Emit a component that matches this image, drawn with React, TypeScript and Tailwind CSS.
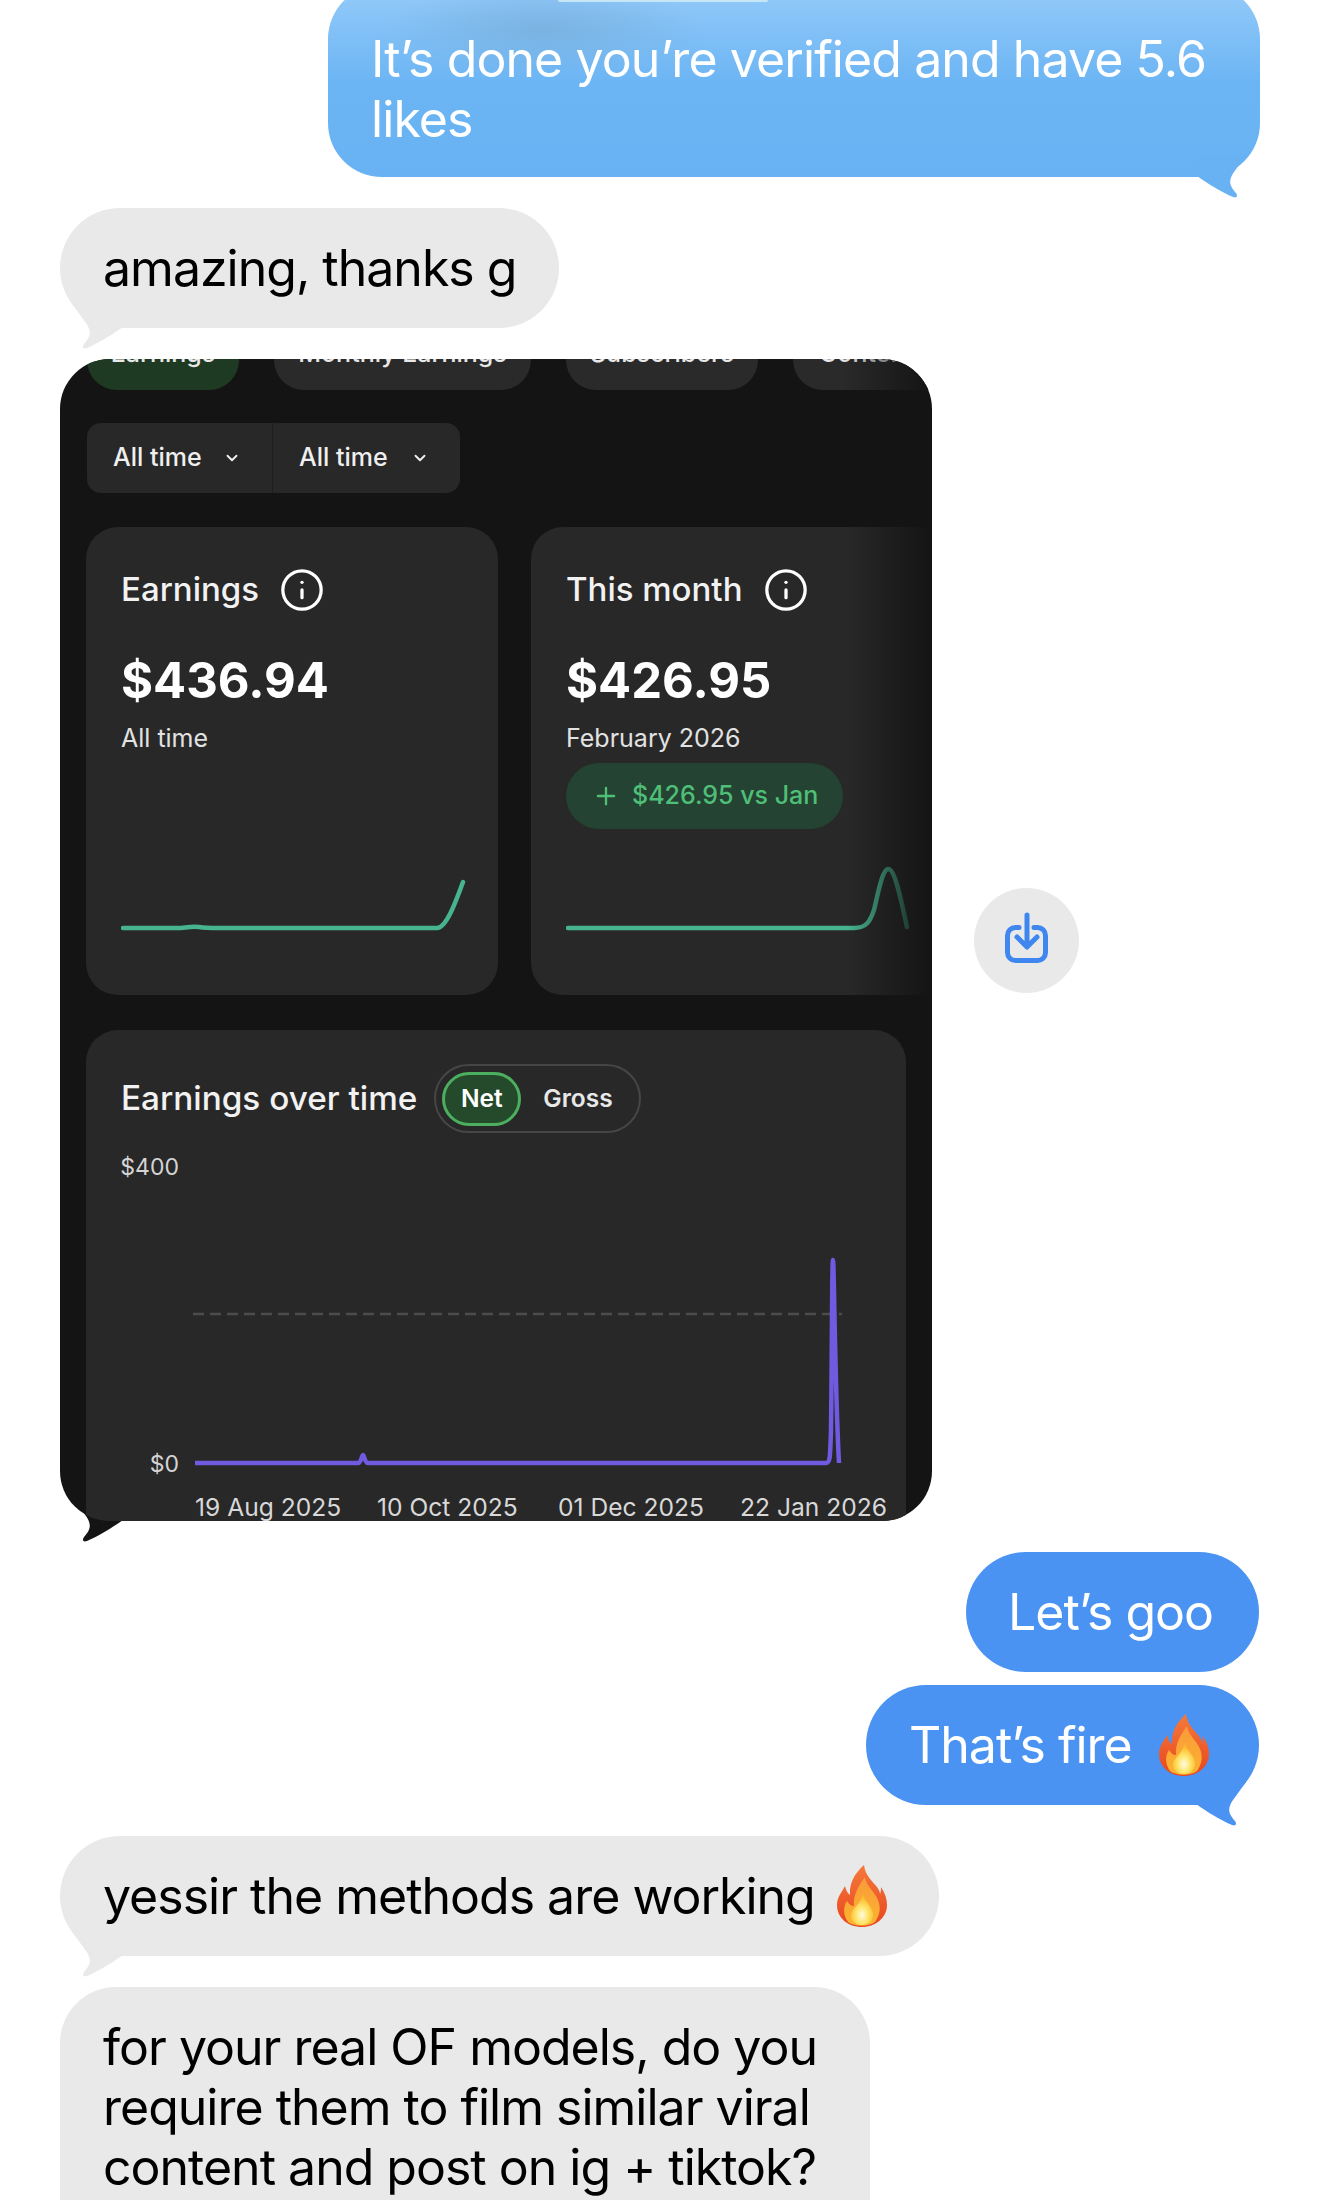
import { ChevronDown, Info, Plus } from "lucide-react";

function Tail({ color, side }: { color: string; side: "left" | "right" }) {
  return (
    <svg
      width="60"
      height="50"
      viewBox="0 0 60 50"
      className={side === "right" ? "absolute right-[9px] bottom-[-25px]" : "absolute left-[9px] bottom-[-25px] scale-x-[-1]"}
    >
      <path
        d="M6 24 C16 31 30 40 42 45 C46 46.5 47 44 45 41 C40 35 36 30 43 20 L56 2 L6 2 Z"
        fill={color}
      />
    </svg>
  );
}

function Flame({ id }: { id: string }) {
  return (
    <svg width="50" height="62" viewBox="0 0 50 62">
      <defs>
        <linearGradient id={id + "a"} x1="0" y1="0" x2="0" y2="1">
          <stop offset="0" stopColor="#f47a3c" />
          <stop offset="1" stopColor="#e9451f" />
        </linearGradient>
        <linearGradient id={id + "b"} x1="0" y1="0" x2="0" y2="1">
          <stop offset="0" stopColor="#f99a3a" />
          <stop offset="1" stopColor="#fbb42f" />
        </linearGradient>
        <radialGradient id={id + "c"} cx="0.5" cy="0.68" r="0.55">
          <stop offset="0" stopColor="#fffbe6" />
          <stop offset="0.45" stopColor="#ffe874" />
          <stop offset="1" stopColor="#fcbb2e" />
        </radialGradient>
      </defs>
      <path
        d="M27 0 C28 10 35 16 40 22 C42 25 43 27 43 29 C44 27 44 24 44 22 C48 28 50 34 50 40 C50 53 38 62 25 62 C11 62 0 53 0 40 C0 32 5 27 8 21 C9 25 10 28 13 30 C12 18 18 8 27 0 Z"
        fill={`url(#${id}a)`}
      />
      <path
        d="M28 12 C29 21 38 27 41 35 C44 42 43 50 38 57 C31 62 18 62 11 57 C6 50 6 42 10 36 C12 39 14 41 17 41 C16 31 21 21 28 12 Z"
        fill={`url(#${id}b)`}
      />
      <path
        d="M26 29 C27 36 35 41 36 48 C37 55 32 60 25 60 C18 60 13 55 14 49 C16 43 24 38 26 29 Z"
        fill={`url(#${id}c)`}
      />
    </svg>
  );
}

function SparkCard({ title, value, sub, path, width, pill }: { title: string; value: string; sub: string; path: string; width: string; pill?: boolean }) {
  return (
    <div className={`${width} shrink-0 h-[468px] rounded-[32px] bg-[#282828] pl-[35px] pt-[43px] pb-[45px] flex flex-col`}>
      <div className="flex items-center gap-[20px] h-[40px] text-[33px] font-medium text-[#f2f2f2]">
        {title}
        <Info size={46} strokeWidth={1.7} className="text-white" />
      </div>
      <div className="mt-[41px] h-[60px] leading-[60px] text-[49px] font-bold text-white">{value}</div>
      <div className="mt-[11px] h-[32px] leading-[32px] text-[25px] text-[#e2e2e2]">{sub}</div>
      {pill && (
        <div className="mt-[9px] w-[277px] h-[66px] rounded-full bg-[#244332] flex items-center pl-[26px] gap-[12px] text-[25px] font-medium text-[#4fbf78]">
          <Plus size={28} strokeWidth={2} />
          $426.95 vs Jan
        </div>
      )}
      <svg width="350" height="90" viewBox="0 0 350 90" className="mt-auto">
        <path d={path} fill="none" stroke="#47b48e" strokeWidth="4.5" strokeLinecap="round" />
      </svg>
    </div>
  );
}

export default function App() {
  const text = "text-[50px] leading-[60px] font-normal tracking-[-0.02em]";
  return (
    <div className="w-[1320px] h-[2200px] overflow-hidden bg-white flex flex-col font-['Inter','Liberation_Sans',sans-serif]">
      {/* first sent message */}
      <div className="relative self-end mr-[60px] mt-[-15px] w-[932px] h-[192px] shrink-0">
        <div className="relative overflow-hidden h-full rounded-[54px] bg-gradient-to-b from-[#95cbf9] via-[#6cb5f4] via-50% to-[#68b2f3] pl-[43px] pt-[44px] text-white text-[50px] leading-[60px] font-normal tracking-[-0.018em]">
          <div className="absolute left-[50px] top-0 w-[330px] h-[90px] bg-[radial-gradient(ellipse_at_center,#76add9b0,transparent_70%)]" />
          <div className="absolute left-[230px] top-[13px] w-[210px] h-[4px] rounded-full bg-[#c4e6f5]" />
          <div className="relative">
            It’s done you’re verified and have 5.6
            <br />
            likes
          </div>
        </div>
        <Tail color="#68b2f3" side="right" />
      </div>

      <div className={`relative ml-[60px] mt-[31px] w-[499px] h-[120px] shrink-0 rounded-[60px] bg-[#e9e9e9] pl-[43px] py-[30px] text-black ${text}`}>
        amazing, thanks g
        <Tail color="#e9e9e9" side="left" />
      </div>

      {/* screenshot attachment */}
      <div className="flex items-center mt-[31px] ml-[60px] gap-[42px] shrink-0">
        <div className="relative w-[872px] h-[1162px]">
          <Tail color="#141414" side="left" />
          <div className="relative h-full overflow-hidden rounded-[50px] bg-[#141414]">
            <div className="relative mt-[-42px] pl-[27px] flex gap-[35px] text-[25px] font-medium text-[#e8e8e8] overflow-hidden">
              <div className="w-[152px] h-[73px] shrink-0 rounded-[30px] bg-[#1f3a22] flex items-center justify-center">Earnings</div>
              <div className="w-[257px] h-[73px] shrink-0 rounded-[30px] bg-[#2a2a2a] flex items-center justify-center">Monthly Earnings</div>
              <div className="w-[192px] h-[73px] shrink-0 rounded-[30px] bg-[#2a2a2a] flex items-center justify-center">Subscribers</div>
              <div className="w-[192px] h-[73px] shrink-0 rounded-[30px] bg-[#2a2a2a] flex items-center pl-[26px]">Content</div>
              <div className="absolute right-0 top-0 w-[90px] h-full bg-gradient-to-r from-transparent to-[#141414]" />
            </div>

            <div className="mt-[33px] ml-[27px] w-[373px] h-[70px] rounded-[14px] bg-[#282828] flex text-[25px] font-medium whitespace-nowrap text-[#efefef]">
              <div className="w-[186px] border-r border-[#1e1e1e] pl-[26px] flex items-center">
                <span className="w-[88px]">All time</span>
                <ChevronDown size={18} strokeWidth={2.5} className="ml-[22px]" />
              </div>
              <div className="pl-[26px] flex items-center">
                <span className="w-[88px]">All time</span>
                <ChevronDown size={18} strokeWidth={2.5} className="ml-[24px]" />
              </div>
            </div>

            <div className="relative mt-[34px] pl-[26px] flex gap-[33px] overflow-hidden">
              <SparkCard
                title="Earnings"
                value="$436.94"
                sub="All time"
                width="w-[412px]"
                path="M2 68 H60 C68 67 72 66 78 67 C84 68 90 68 98 68 H316 C325 68 334 44 342 22"
              />
              <SparkCard
                title="This month"
                value="$426.95"
                sub="February 2026"
                width="w-[430px]"
                pill
                path="M2 68 H288 C300 68 304 62 308 50 C312 34 316 10 322 9 C329 8 335 40 341 67"
              />
              <div className="absolute right-0 top-0 w-[85px] h-full bg-gradient-to-r from-transparent to-[#141414]" />
            </div>

            <div className="mt-[35px] mx-[26px] h-[520px] rounded-[32px] bg-[#282828] pt-[34px]">
              <div className="flex items-center pl-[35px]">
                <span className="text-[33.3px] font-medium text-[#f2f2f2]">Earnings over time</span>
                <div className="ml-[17px] w-[207px] h-[69px] rounded-full border-2 border-[#464646] flex items-center pl-[6px] text-[24.5px] font-semibold text-[#e8e8e8]">
                  <span className="w-[79px] h-[54px] rounded-full border-[3px] border-[#4caf5f] bg-[#244a2b] flex items-center justify-center text-white">Net</span>
                  <span className="ml-[22px]">Gross</span>
                </div>
              </div>

              <div className="mt-[18px] flex">
                <div className="w-[93px] h-[329px] flex flex-col justify-between text-right text-[23px] leading-[32px] text-[#d4d4d4]">
                  <span>$400</span>
                  <span>$0</span>
                </div>
                <svg width="660" height="329" viewBox="0 0 660 329" className="ml-[13px]">
                  <path d="M1 163 H650" stroke="#4c4c4c" strokeWidth="2.5" strokeDasharray="11 6" />
                  <path
                    d="M3 312 H166 C169 312 170 304 171 304 C172 304 173 312 176 312 H634 C638 312 638 308 639 280 C640 200 640 109 641 109 C642 109 643 240 647 312"
                    fill="none"
                    stroke="#6f5ae0"
                    strokeWidth="4.5"
                    strokeLinejoin="round"
                  />
                </svg>
              </div>

              <div className="mt-[11px] ml-[109px] flex text-[24.6px] leading-[32px] whitespace-nowrap text-[#d8d8d8]">
                <span className="w-[182px]">19 Aug 2025</span>
                <span className="w-[181px]">10 Oct 2025</span>
                <span className="w-[182px]">01 Dec 2025</span>
                <span>22 Jan 2026</span>
              </div>
            </div>
          </div>
        </div>

        <div className="w-[105px] h-[105px] rounded-full bg-[#e9e9e9] flex items-center justify-center">
          <svg width="60" height="60" viewBox="0 0 60 60" fill="none" stroke="#3f87ef" strokeWidth="5" strokeLinecap="round" strokeLinejoin="round">
            <path d="M22 17.5 H18.5 a8 8 0 0 0 -8 8 V42.5 a8 8 0 0 0 8 8 H40.5 a8 8 0 0 0 8 -8 V25.5 a8 8 0 0 0 -8 -8 H37" />
            <path d="M30 5 V36 M20 27 L30 37 L40 27" />
          </svg>
        </div>
      </div>

      <div className={`self-end mr-[61px] mt-[31px] w-[293px] h-[120px] shrink-0 rounded-[60px] bg-[#4a93f3] pl-[42px] py-[30px] text-white ${text}`}>
        Let’s goo
      </div>

      <div className={`relative self-end mr-[61px] mt-[13px] w-[393px] h-[120px] shrink-0 rounded-[60px] bg-[#4a93f3] pl-[43px] flex items-center text-white ${text}`}>
        That’s fire
        <span className="ml-[27px] flex">
          <Flame id="f1" />
        </span>
        <Tail color="#4a93f3" side="right" />
      </div>

      <div className={`relative ml-[60px] mt-[31px] w-[879px] h-[120px] shrink-0 rounded-[60px] bg-[#e9e9e9] pl-[43px] flex items-center text-black ${text}`}>
        yessir the methods are working
        <span className="ml-[22px] flex">
          <Flame id="f2" />
        </span>
        <Tail color="#e9e9e9" side="left" />
      </div>

      <div className={`ml-[60px] mt-[31px] w-[810px] h-[300px] shrink-0 rounded-[56px] bg-[#e9e9e9] pl-[43px] pt-[30px] text-black ${text}`}>
        for your real OF models, do you
        <br />
        require them to film similar viral
        <br />
        content and post on ig + tiktok?
      </div>
    </div>
  );
}
